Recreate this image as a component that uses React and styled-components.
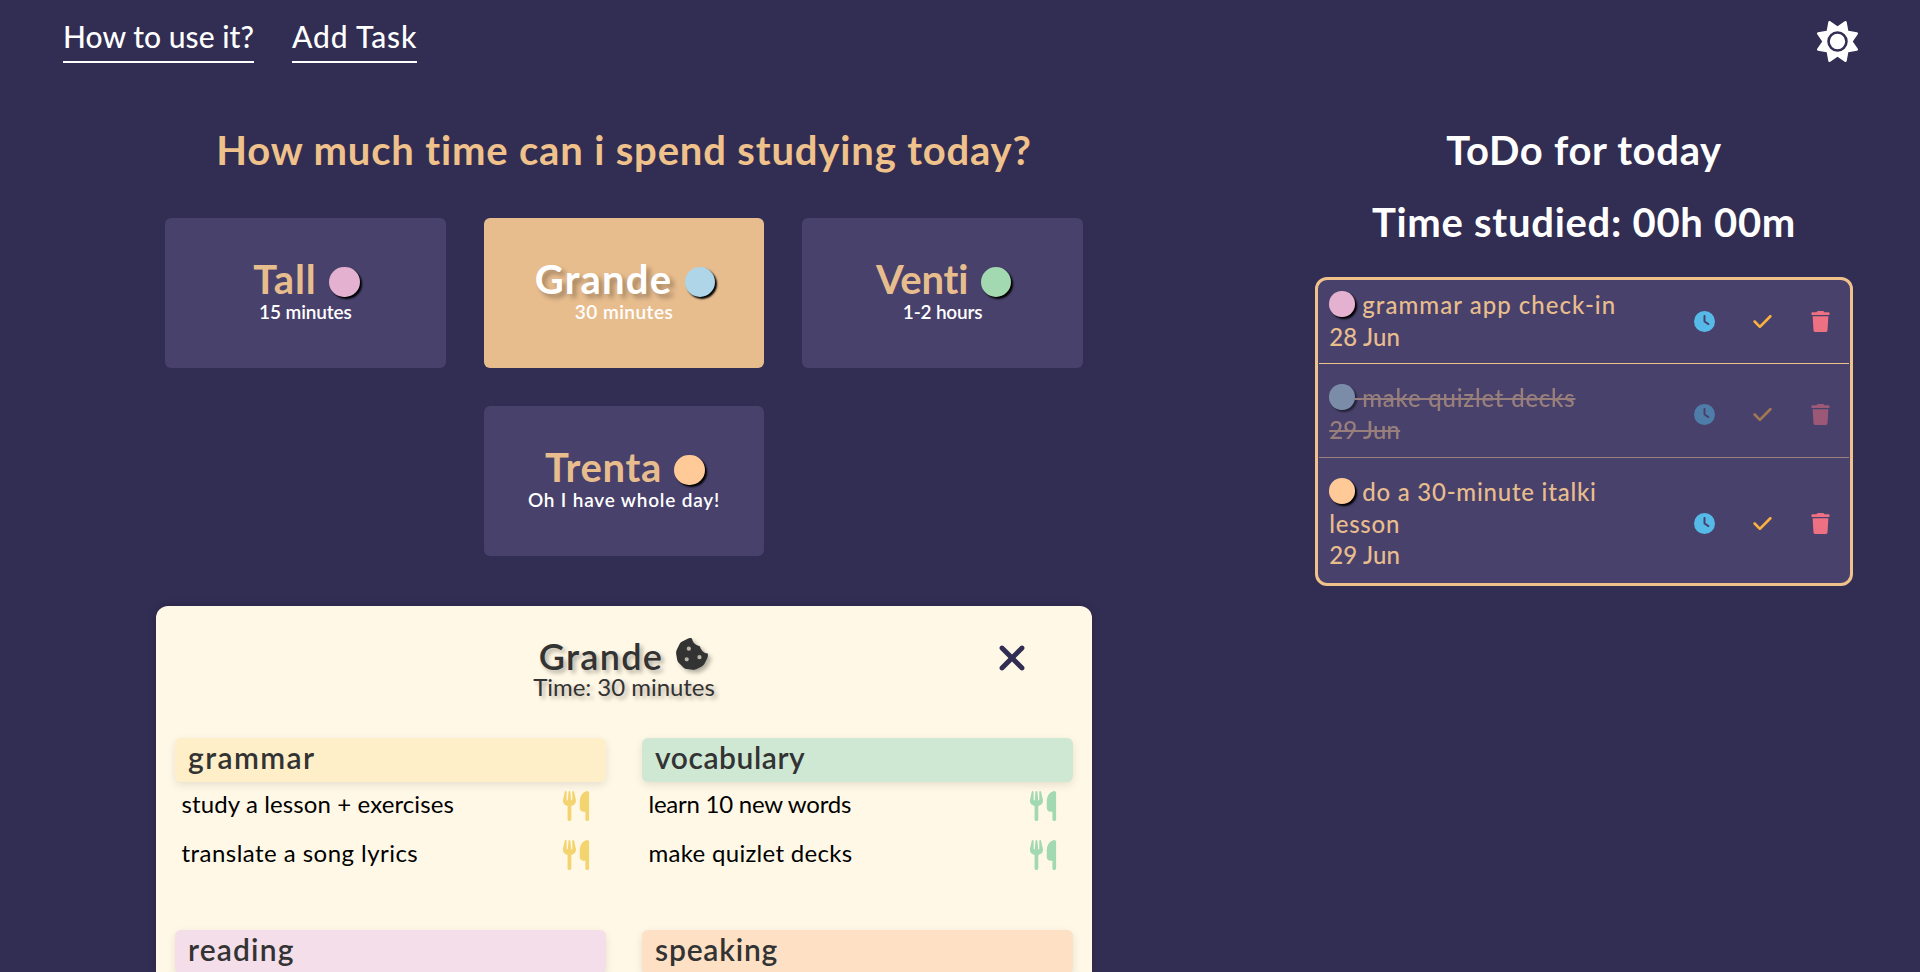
import React from 'react';
import styled, { createGlobalStyle } from 'styled-components';
import { FaSun, FaCookieBite, FaXmark, FaUtensils, FaClock, FaCheck, FaTrash } from 'react-icons/fa6';

const GlobalStyle = createGlobalStyle`
  * { box-sizing: border-box; }
  html, body { margin: 0; height: 100%; overflow: hidden; }
  body {
    background: #322d52;
    color: #fff;
    font-family: Lato, "Liberation Sans", sans-serif;
  }
  h1, h2, h3, h4, p, ul { margin: 0; padding: 0; font-weight: inherit; }
  button { border: 0; padding: 0; background: none; font: inherit; color: inherit; cursor: pointer; }
  svg { display: block; }
`;

const Header = styled.header`
  display: flex;
  justify-content: space-between;
  align-items: flex-start;
  height: 90px;
  padding: 18px 62px 0 63px;
`;

const Nav = styled.nav`
  display: flex;
  gap: 38px;
`;

const NavLink = styled.a`
  padding-bottom: 6px;
  border-bottom: 2px solid #fff;
  font-size: 30px;
  font-weight: 500;
  line-height: 37px;
  letter-spacing: ${(p) => p.$track}px;
`;

const ThemeToggle = styled.button`
  margin-top: 3px;
  font-size: 41px;
`;

const Page = styled.main`
  display: grid;
  grid-template-columns: 65% 35%;
  height: calc(100vh - 90px);
  padding-top: 37px;
  overflow: hidden;
`;

const Column = styled.section`
  display: flex;
  flex-direction: column;
  align-items: center;
  min-height: 0;
`;

const Heading = styled.h1`
  color: ${(p) => (p.$accent ? '#efc18b' : '#fff')};
  font-size: 40px;
  font-weight: 700;
  line-height: 47px;
  letter-spacing: ${(p) => p.$track}px;
  white-space: nowrap;
`;

const Sizes = styled.div`
  display: flex;
  flex-wrap: wrap;
  justify-content: center;
  gap: 38px;
  width: 918px;
  margin-top: 44px;
`;

const SizeCard = styled.button`
  display: flex;
  flex-direction: column;
  align-items: center;
  width: 280.6px;
  height: 150px;
  padding-top: 42px;
  border-radius: 6px;
  background: ${(p) => (p.$active ? '#e8bd8e' : '#48416b')};
  color: #fff;
`;

const SizeTitle = styled.h2`
  display: flex;
  gap: 12.5px;
  padding-left: 2px;
  color: ${(p) => (p.$active ? '#fff' : '#e8bd8e')};
  font-size: 40px;
  font-weight: 700;
  line-height: 39px;
  letter-spacing: ${(p) => p.$track}px;
  text-shadow: ${(p) => (p.$active ? '4px 4px 5px rgba(0, 0, 0, 0.3)' : 'none')};
`;

const SizeTime = styled.p`
  font-size: 19px;
  font-weight: 600;
  line-height: 25px;
  letter-spacing: ${(p) => p.$track}px;
`;

const Dot = styled.span`
  display: inline-block;
  border-radius: 50%;
  background: ${(p) => p.$color};
  box-shadow: 2px 2px 2px #000;
`;

const SizeDot = styled(Dot)`
  width: 30.5px;
  height: 30.5px;
  margin-top: 6.6px;
`;

const Menu = styled.article`
  flex: 1;
  width: 75%;
  min-height: 0;
  margin-top: 50px;
  padding: 30px 19px 0;
  border-radius: 12px 12px 0 0;
  background: #fff8e6;
  color: #333;
  box-shadow: 0 0 8px rgba(0, 0, 0, 0.15);
`;

const MenuHeader = styled.header`
  display: grid;
  grid-template-columns: 1fr auto 1fr;
  height: 62px;
`;

const MenuHeading = styled.div`
  grid-column: 2;
  display: flex;
  flex-direction: column;
  align-items: center;
  text-shadow: 3px 3px 4px rgba(0, 0, 0, 0.3);
`;

const MenuTitle = styled.h2`
  display: flex;
  gap: 12px;
  font-size: 36px;
  font-weight: 600;
  line-height: 40px;
  letter-spacing: 1.29px;

  svg {
    margin-top: 1px;
    font-size: 34px;
    filter: drop-shadow(3px 3px 2px rgba(0, 0, 0, 0.3));
  }
`;

const MenuTime = styled.p`
  font-size: 24px;
  line-height: 22px;
  letter-spacing: -0.04px;
`;

const CloseButton = styled.button`
  justify-self: end;
  align-self: start;
  margin: 1.5px 41px 0 0;
  color: #322d52;
  font-size: 40px;
`;

const Skills = styled.div`
  display: grid;
  grid-template-columns: 1fr 1fr;
  gap: 50px 36px;
  margin-top: 40px;
`;

const SkillTitle = styled.h3`
  height: 44px;
  padding-left: 13px;
  border-radius: 6px;
  background: ${(p) => p.$color};
  box-shadow: 0 3px 8px rgba(0, 0, 0, 0.1);
  font-size: 30px;
  font-weight: 600;
  line-height: 39.5px;
  letter-spacing: ${(p) => p.$track}px;
`;

const Activity = styled.div`
  display: flex;
  justify-content: space-between;
  align-items: center;
  height: 49px;
  padding: 0 15px 0 6.5px;
  color: #000;
  font-size: 24px;
`;

const ActivityName = styled.span`
  align-self: flex-start;
  line-height: 43px;
  letter-spacing: ${(p) => p.$track}px;
`;

const AddButton = styled.button`
  margin-bottom: 2px;
  color: ${(p) => p.$color};
  font-size: 30px;
`;

const StudiedTime = styled(Heading).attrs({ as: 'h2' })`
  margin-top: 25px;
`;

const TodoList = styled.ul`
  width: 80%;
  margin-top: 31px;
  padding: 0 1px;
  border: 3px solid #efc18b;
  border-radius: 12px;
  background: #48416b;
  list-style: none;
`;

const TodoItem = styled.li`
  display: flex;
  justify-content: space-between;
  align-items: center;
  padding: 18px 0 12px 10px;
  border-bottom: 1px solid #efc18b;
  opacity: ${(p) => (p.$done ? 0.5 : 1)};

  &:first-child { padding-top: 9px; padding-bottom: 11px; }
  &:last-child { border-bottom: 0; }
`;

const TodoText = styled.div`
  width: 310px;
  color: #e8bd8e;
  font-size: 24px;
  font-weight: 500;
  line-height: 31.5px;
  text-decoration: ${(p) => (p.$done ? 'line-through 2px' : 'none')};
`;

const TodoLine = styled.p`
  letter-spacing: ${(p) => p.$track}px;
`;

const TodoDot = styled(Dot)`
  width: 25.5px;
  height: 25.5px;
  vertical-align: -2.5px;
`;

const Spacer = styled.span`
  white-space: pre;
  letter-spacing: 1.5px;
`;

const Actions = styled.div`
  display: grid;
  grid-template-columns: repeat(3, 58px);
  justify-items: center;
  padding-top: 1px;
  margin-right: -1px;
  font-size: 21px;
`;

const Action = styled.button`
  color: ${(p) => p.$color};
`;

const sizes = [
  { name: 'Tall', track: 0.89, time: '15 minutes', timeTrack: -0.12, color: '#e5b1d0' },
  { name: 'Grande', track: 1.21, time: '30 minutes', timeTrack: 0.46, color: '#aed6e8', active: true },
  { name: 'Venti', track: -0.2, time: '1-2 hours', timeTrack: -0.2, color: '#a3d9b1' },
  { name: 'Trenta', track: 0.64, time: 'Oh I have whole day!', timeTrack: 0.81, color: '#ffc998' },
];

const skills = [
  {
    name: 'grammar', track: 1.41, color: '#feefc9', icon: '#f4d470',
    items: [['study a lesson + exercises', 0.11], ['translate a song lyrics', 0.46]],
  },
  {
    name: 'vocabulary', track: 0.56, color: '#cfe8d3', icon: '#a3d9b1',
    items: [['learn 10 new words', -0.24], ['make quizlet decks', 0.3]],
  },
  { name: 'reading', track: 1.15, color: '#f4deea', icon: '#e5b1d0', items: [] },
  { name: 'speaking', track: 0.8, color: '#fee0c4', icon: '#ffc998', items: [] },
];

const todos = [
  { name: 'grammar app check-in', track: 1.03, date: '28 Jun', color: '#e5b1d0' },
  { name: 'make quizlet decks', track: 0.76, date: '29 Jun', color: '#aed6e8', done: true },
  { name: 'do a 30-minute italki lesson', track: 0.76, date: '29 Jun', color: '#ffc998' },
];

export default function App() {
  return (
    <>
      <GlobalStyle />
      <Header>
        <Nav>
          <NavLink $track={0.05}>How to use it?</NavLink>
          <NavLink $track={0.85}>Add Task</NavLink>
        </Nav>
        <ThemeToggle aria-label="Toggle theme"><FaSun /></ThemeToggle>
      </Header>
      <Page>
        <Column>
          <Heading $accent $track={0.83}>How much time can i spend studying today?</Heading>
          <Sizes>
            {sizes.map((s) => (
              <SizeCard key={s.name} $active={s.active}>
                <SizeTitle $active={s.active} $track={s.track}>
                  {s.name}
                  <SizeDot $color={s.color} />
                </SizeTitle>
                <SizeTime $track={s.timeTrack}>{s.time}</SizeTime>
              </SizeCard>
            ))}
          </Sizes>
          <Menu>
            <MenuHeader>
              <MenuHeading>
                <MenuTitle>Grande <FaCookieBite /></MenuTitle>
                <MenuTime>Time: 30 minutes</MenuTime>
              </MenuHeading>
              <CloseButton aria-label="Close"><FaXmark /></CloseButton>
            </MenuHeader>
            <Skills>
              {skills.map((s) => (
                <section key={s.name}>
                  <SkillTitle $color={s.color} $track={s.track}>{s.name}</SkillTitle>
                  {s.items.map(([name, track]) => (
                    <Activity key={name}>
                      <ActivityName $track={track}>{name}</ActivityName>
                      <AddButton $color={s.icon} aria-label="Add"><FaUtensils /></AddButton>
                    </Activity>
                  ))}
                </section>
              ))}
            </Skills>
          </Menu>
        </Column>
        <Column>
          <Heading $track={0.68}>ToDo for today</Heading>
          <StudiedTime $track={0.72}>Time studied: 00h 00m</StudiedTime>
          <TodoList>
            {todos.map((t) => (
              <TodoItem key={t.name} $done={t.done}>
                <TodoText $done={t.done}>
                  <TodoLine $track={t.track}>
                    <TodoDot $color={t.color} />
                    <Spacer> </Spacer>
                    {t.name}
                  </TodoLine>
                  <TodoLine $track={0.17}>{t.date}</TodoLine>
                </TodoText>
                <Actions>
                  <Action $color="#56bae8" aria-label="Track time"><FaClock /></Action>
                  <Action $color="#fbb03f" aria-label="Complete"><FaCheck /></Action>
                  <Action $color="#ee7183" aria-label="Delete"><FaTrash /></Action>
                </Actions>
              </TodoItem>
            ))}
          </TodoList>
        </Column>
      </Page>
    </>
  );
}
